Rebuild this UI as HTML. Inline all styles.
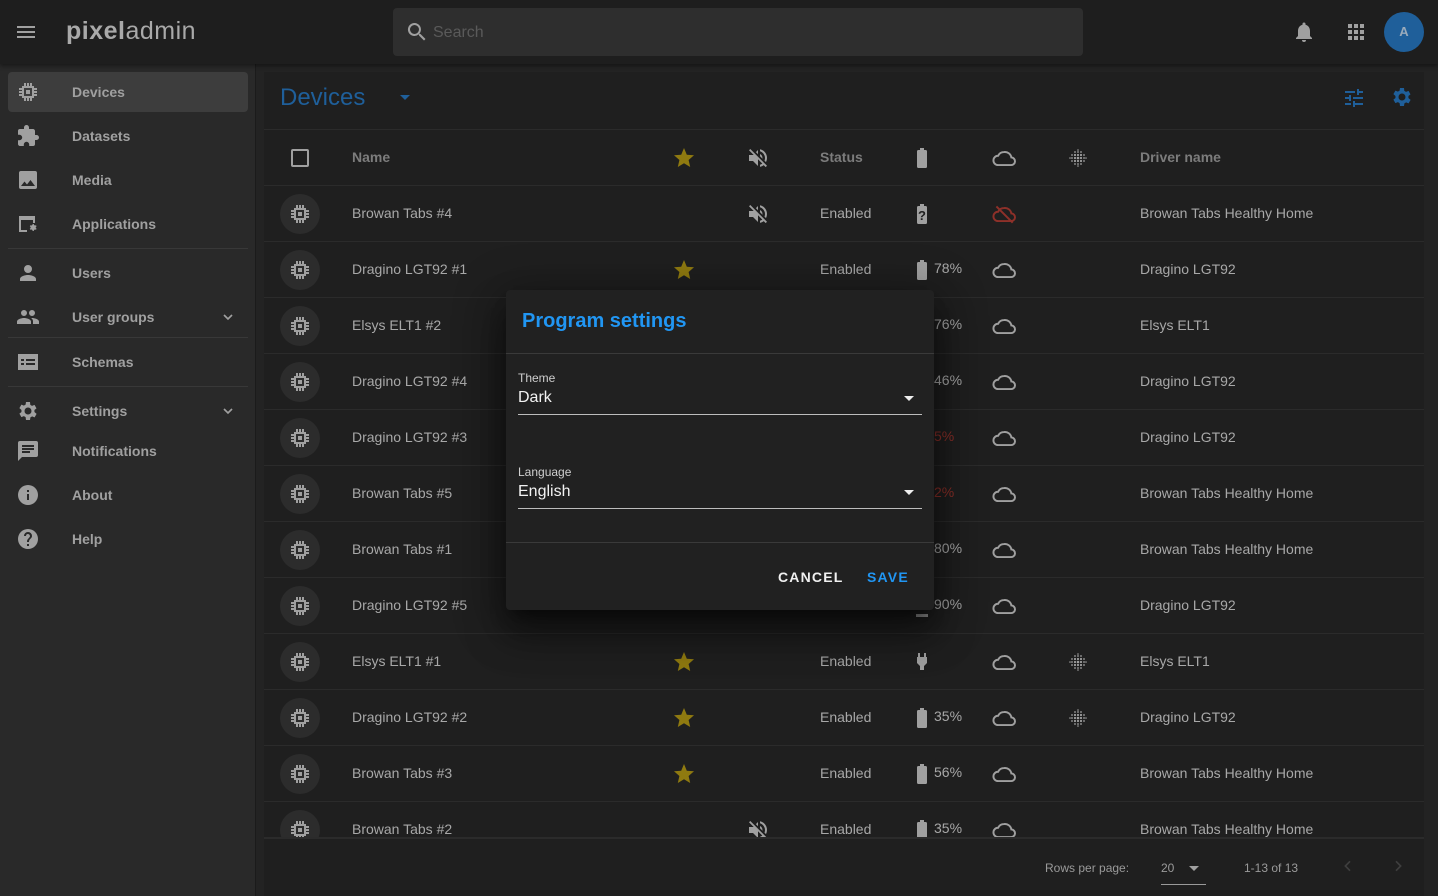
<!DOCTYPE html>
<html><head><meta charset="utf-8"><style>
*{box-sizing:border-box;margin:0;padding:0}
body{width:1438px;height:896px;overflow:hidden;background:#232323;font-family:"Liberation Sans",sans-serif;color:#a8a8a8;position:relative}
.top{position:absolute;left:0;top:0;width:1438px;height:64px;background:#1e1e1e;box-shadow:0 2px 4px rgba(0,0,0,.4);z-index:2}
.logo{position:absolute;left:66px;top:17px;font-size:25px;color:#a9a9a9;letter-spacing:.5px}
.logo b{font-weight:bold}
.search{position:absolute;left:393px;top:8px;width:690px;height:48px;background:#2e2e2e;border-radius:4px}
.search span{position:absolute;left:40px;top:16px;font-size:16px;color:#5a5a5a}
.side{position:absolute;left:0;top:64px;width:256px;height:832px;background:#292929;border-right:1px solid #1b1b1b}
.it{position:absolute;left:8px;width:240px;height:40px;font-size:14px;color:#a0a0a0;font-weight:bold}
.it span{position:absolute;left:64px;top:12px}
.it svg{position:absolute;left:8px;top:8px}
.it .ch{left:212px;top:12px}
.sel{background:#3d3d3d;border-radius:4px}
.hr{position:absolute;left:8px;width:240px;height:1px;background:#383838}
.panel{position:absolute;left:264px;top:72px;width:1160px;height:824px;background:#1f1f1f}
.ttl{position:absolute;left:16px;top:12px;font-size:24px;color:#1f5f9a}
.row{position:absolute;left:0;width:1160px;height:56px;border-bottom:1px solid #2b2b2b;font-size:14px}
.row>*{position:absolute}
.nm{left:88px;top:19px}
.st{left:556px;top:19px}
.dr{left:876px;top:19px}
.pc{left:670px;top:18px;font-size:14px}
.av{left:16px;top:8px;width:40px;height:40px;border-radius:50%;background:#2c2c2c}
.av svg{position:absolute;left:8px;top:8px}
.i{top:16px}
.hd{font-weight:bold;color:#7c7c7c}
.red{color:#8e3029}
.foot{position:absolute;left:264px;top:838px;width:1160px;height:58px;font-size:12px;color:#9a9a9a}
.dlg{position:absolute;left:506px;top:290px;width:428px;height:320px;background:#212121;border-radius:4px;box-shadow:0 11px 15px -7px rgba(0,0,0,.5),0 24px 38px 3px rgba(0,0,0,.35),0 9px 46px 8px rgba(0,0,0,.3);z-index:5}
.dlg .t{position:absolute;left:16px;top:20px;font-size:20px;color:#2196f3;font-weight:bold}
.dv{position:absolute;left:0;width:428px;height:1px;background:#3a3a3a}
.lb{position:absolute;left:12px;font-size:12px;color:#cfcfcf}
.vl{position:absolute;left:12px;font-size:16px;color:#f2f2f2}
.ul{position:absolute;left:12px;width:404px;height:1px;background:#bdbdbd}
.ar{position:absolute;left:398px;width:0;height:0;border-left:5px solid transparent;border-right:5px solid transparent;border-top:5px solid #eee}
.btn{position:absolute;top:279px;font-size:14px;font-weight:bold;letter-spacing:1.2px}
</style></head><body>
<svg width="0" height="0" style="position:absolute">
<defs>
<symbol id="chip" viewBox="0 0 24 24"><path fill="currentColor" fill-rule="evenodd" d="M6 6h12v12H6zM8 8v8h8V8zM10 10h4v4h-4zM8 3h2v3H8zM11 3h2v3h-2zM14 3h2v3h-2zM8 18h2v3H8zM11 18h2v3h-2zM14 18h2v3h-2zM3 8h3v2H3zM3 11h3v2H3zM3 14h3v2H3zM18 8h3v2h-3zM18 11h3v2h-3zM18 14h3v2h-3z"/></symbol>
<symbol id="star" viewBox="0 0 24 24"><path fill="#8f7a10" d="M12 17.3l6.2 3.7-1.6-7 5.4-4.7-7.2-.6L12 2 9.2 8.7 2 9.3l5.4 4.7-1.6 7z"/></symbol>
<symbol id="mute" viewBox="0 0 24 24"><path fill="#a0a0a0" d="M16.5 12A4.5 4.5 0 0014 8v2.2l2.5 2.5V12zM19 12c0 .9-.2 1.8-.5 2.6l1.5 1.5A8.8 8.8 0 0021 12a9 9 0 00-7-8.8v2.1A7 7 0 0119 12zM4.3 3L3 4.3 7.7 9H3v6h4l5 5v-6.7l4.3 4.3c-.7.5-1.4.9-2.3 1.2v2.1a9 9 0 003.7-1.8l2 2 1.3-1.3-9-9zM12 4L9.9 6.1 12 8.2z"/></symbol>
<symbol id="bat" viewBox="0 0 24 24"><path fill="#a0a0a0" d="M15.7 4H14V2h-4v2H8.3C7.6 4 7 4.6 7 5.3v15.3c0 .8.6 1.4 1.3 1.4h7.3c.8 0 1.4-.6 1.4-1.3V5.3C17 4.6 16.4 4 15.7 4z"/></symbol>
<symbol id="cloud" viewBox="0 0 24 24"><path fill="none" stroke="#a0a0a0" stroke-width="1.8" d="M6.5 18.5h12a3.5 3.5 0 00.3-7A6 6 0 0012 6.5a6 6 0 00-5.4 3.4A4.3 4.3 0 006.5 18.5z"/></symbol>
<symbol id="grid" viewBox="0 0 24 24"><g fill="#a0a0a0"><circle cx="12" cy="4" r=".8"/><circle cx="12" cy="20" r=".8"/><circle cx="4" cy="12" r=".8"/><circle cx="20" cy="12" r=".8"/><circle cx="9" cy="6" r=".9"/><circle cx="15" cy="6" r=".9"/><circle cx="9" cy="18" r=".9"/><circle cx="15" cy="18" r=".9"/><circle cx="6" cy="9" r=".9"/><circle cx="6" cy="15" r=".9"/><circle cx="18" cy="9" r=".9"/><circle cx="18" cy="15" r=".9"/><circle cx="9" cy="9" r="1.1"/><circle cx="12" cy="9" r="1.1"/><circle cx="15" cy="9" r="1.1"/><circle cx="9" cy="12" r="1.1"/><circle cx="12" cy="12" r="1.3"/><circle cx="15" cy="12" r="1.1"/><circle cx="9" cy="15" r="1.1"/><circle cx="12" cy="15" r="1.1"/><circle cx="15" cy="15" r="1.1"/><circle cx="12" cy="6" r=".9"/><circle cx="12" cy="18" r=".9"/><circle cx="6" cy="12" r=".9"/><circle cx="18" cy="12" r=".9"/></g></symbol>
</defs></svg>

<div class="top">
<svg style="position:absolute;left:14px;top:20px" width="24" height="24" viewBox="0 0 24 24"><path fill="#a0a0a0" d="M3 6h18v2H3zM3 11h18v2H3zM3 16h18v2H3z"/></svg>
<div class="logo"><b>pixel</b>admin</div>
<div class="search"><svg style="position:absolute;left:12px;top:12px" width="24" height="24" viewBox="0 0 24 24"><path fill="#a0a0a0" d="M15.5 14h-.8l-.3-.3A6.5 6.5 0 109.5 16a6.5 6.5 0 004.2-1.6l.3.3v.8l5 5 1.5-1.5-5-5zm-6 0A4.5 4.5 0 1114 9.5 4.5 4.5 0 019.5 14z"/></svg><span>Search</span></div>
<svg style="position:absolute;left:1292px;top:20px" width="24" height="24" viewBox="0 0 24 24"><path fill="#a0a0a0" d="M12 22a2 2 0 002-2h-4a2 2 0 002 2zm6-6v-5c0-3.1-1.6-5.6-4.5-6.3V4a1.5 1.5 0 00-3 0v.7C7.6 5.4 6 7.9 6 11v5l-2 2v1h16v-1z"/></svg>
<svg style="position:absolute;left:1344px;top:20px" width="24" height="24" viewBox="0 0 24 24"><path fill="#a0a0a0" d="M4 4h4v4H4zM10 4h4v4h-4zM16 4h4v4h-4zM4 10h4v4H4zM10 10h4v4h-4zM16 10h4v4h-4zM4 16h4v4H4zM10 16h4v4h-4zM16 16h4v4h-4z"/></svg>
<div style="position:absolute;left:1384px;top:12px;width:40px;height:40px;border-radius:50%;background:#1f5f9a;color:#9ab;font-size:13px;text-align:center;line-height:40px;font-weight:bold">A</div>
</div>

<div class="side">
<div class="it sel" style="top:8px"><svg width="24" height="24" style="color:#a0a0a0"><use href="#chip"/></svg><span>Devices</span></div>
<div class="it" style="top:52px"><svg width="24" height="24" viewBox="0 0 24 24"><path fill="#a0a0a0" d="M20.5 11H19V7c0-1.1-.9-2-2-2h-4V3.5a2.5 2.5 0 00-5 0V5H4a2 2 0 00-2 2v3.8h1.5a2.7 2.7 0 010 5.4H2V20c0 1.1.9 2 2 2h3.8v-1.5a2.7 2.7 0 015.4 0V22H17a2 2 0 002-2v-4h1.5a2.5 2.5 0 000-5z"/></svg><span>Datasets</span></div>
<div class="it" style="top:96px"><svg width="24" height="24" viewBox="0 0 24 24"><path fill="#a0a0a0" d="M21 19V5a2 2 0 00-2-2H5a2 2 0 00-2 2v14a2 2 0 002 2h14a2 2 0 002-2zM8.5 13.5l2.5 3 3.5-4.5 4.5 6H5z"/></svg><span>Media</span></div>
<div class="it" style="top:140px"><svg width="24" height="24" viewBox="0 0 24 24"><path fill="#a0a0a0" d="M3 4h16v7h-2V8H5v10h6v2H3zM18 13l1 .5 1-.3.6 1-.8.8v1l.8.8-.6 1-1-.3-1 .5-.2 1h-1.2l-.2-1-1-.5-1 .3-.6-1 .8-.8v-1l-.8-.8.6-1 1 .3 1-.5.2-1h1.2z"/></svg><span>Applications</span></div>
<div class="hr" style="top:184px"></div>
<div class="it" style="top:189px"><svg width="24" height="24" viewBox="0 0 24 24"><path fill="#a0a0a0" d="M12 12a4 4 0 100-8 4 4 0 000 8zm0 2c-2.7 0-8 1.3-8 4v2h16v-2c0-2.7-5.3-4-8-4z"/></svg><span>Users</span></div>
<div class="it" style="top:233px"><svg width="24" height="24" viewBox="0 0 24 24"><path fill="#a0a0a0" d="M16 11a3 3 0 100-6 3 3 0 000 6zm-8 0a3 3 0 100-6 3 3 0 000 6zm0 2c-2.3 0-7 1.2-7 3.5V19h14v-2.5C15 14.2 10.3 13 8 13zm8 0h-1a4 4 0 012 3.5V19h6v-2.5c0-2.3-4.7-3.5-7-3.5z"/></svg><span>User groups</span><svg class="ch" width="16" height="16" viewBox="0 0 24 24"><path fill="none" stroke="#a0a0a0" stroke-width="2.5" d="M6 9l6 6 6-6"/></svg></div>
<div class="hr" style="top:273px"></div>
<div class="it" style="top:278px"><svg width="24" height="24" viewBox="0 0 24 24"><path fill="#a0a0a0" fill-rule="evenodd" d="M2 4h20v16H2zM5 9h3v2H5zM10 9h9v2h-9zM5 13h3v2H5zM10 13h9v2h-9z"/></svg><span>Schemas</span></div>
<div class="hr" style="top:322px"></div>
<div class="it" style="top:327px"><svg width="24" height="24" viewBox="0 0 24 24"><path fill="#a0a0a0" d="M19.4 13a7.5 7.5 0 000-2l2.1-1.6-2-3.5-2.5 1a7 7 0 00-1.7-1L15 3h-4l-.4 2.6a7 7 0 00-1.7 1l-2.5-1-2 3.5L6.5 11a7.5 7.5 0 000 2l-2.1 1.6 2 3.5 2.5-1c.5.4 1.1.7 1.7 1L11 21h4l.4-2.6c.6-.3 1.2-.6 1.7-1l2.5 1 2-3.5zM13 15.5a3.5 3.5 0 110-7 3.5 3.5 0 010 7z" transform="translate(-1 0)"/></svg><span>Settings</span><svg class="ch" width="16" height="16" viewBox="0 0 24 24"><path fill="none" stroke="#a0a0a0" stroke-width="2.5" d="M6 9l6 6 6-6"/></svg></div>
<div class="it" style="top:367px"><svg width="24" height="24" viewBox="0 0 24 24"><path fill="#a0a0a0" d="M20 2H4a2 2 0 00-2 2v18l4-4h14a2 2 0 002-2V4a2 2 0 00-2-2zM6 9h12v2H6zm8 5H6v-2h8zm4-6H6V6h12z"/></svg><span>Notifications</span></div>
<div class="it" style="top:411px"><svg width="24" height="24" viewBox="0 0 24 24"><path fill="#a0a0a0" d="M12 2a10 10 0 100 20 10 10 0 000-20zm1 15h-2v-6h2zm0-8h-2V7h2z"/></svg><span>About</span></div>
<div class="it" style="top:455px"><svg width="24" height="24" viewBox="0 0 24 24"><path fill="#a0a0a0" d="M12 2a10 10 0 100 20 10 10 0 000-20zm1 17h-2v-2h2zm2-7.8l-.9.9c-.7.7-1.1 1.3-1.1 2.9h-2v-.5c0-1.1.4-2.1 1.2-2.8l1.2-1.3A2 2 0 0012 7a2 2 0 00-2 2H8a4 4 0 018 0c0 .9-.4 1.7-1 2.2z"/></svg><span>Help</span></div>
</div>

<div class="panel">
<div class="ttl">Devices</div>
<div style="position:absolute;left:136px;top:23px;border-left:5px solid transparent;border-right:5px solid transparent;border-top:5px solid #1f5f9a"></div>
<svg style="position:absolute;left:1078px;top:14px" width="24" height="24" viewBox="0 0 24 24"><path fill="#1f5f9a" d="M3 17v2h6v-2zM3 5v2h10V5zm10 16v-2h8v-2h-8v-2h-2v6zM7 9v2H3v2h4v2h2V9zm14 4v-2H11v2zm-6-4h2V7h4V5h-4V3h-2z"/></svg>
<svg style="position:absolute;left:1126px;top:13px" width="24" height="24" viewBox="0 0 24 24"><path fill="#1f5f9a" d="M19.4 13a7.5 7.5 0 000-2l2.1-1.6-2-3.5-2.5 1a7 7 0 00-1.7-1L15 3h-4l-.4 2.6a7 7 0 00-1.7 1l-2.5-1-2 3.5L6.5 11a7.5 7.5 0 000 2l-2.1 1.6 2 3.5 2.5-1c.5.4 1.1.7 1.7 1L11 21h4l.4-2.6c.6-.3 1.2-.6 1.7-1l2.5 1 2-3.5zM13 15.5a3.5 3.5 0 110-7 3.5 3.5 0 010 7z" transform="translate(-1 0)"/></svg>
<div style="position:absolute;left:0;top:57px;width:1160px;height:1px;background:#2b2b2b"></div>

<div class="row hd" style="top:58px">
<div style="left:27px;top:19px;width:18px;height:18px;border:2px solid #a0a0a0;border-radius:2px"></div>
<span class="nm">Name</span>
<svg class="i" style="left:408px" width="24" height="24"><use href="#star"/></svg>
<svg class="i" style="left:482px" width="24" height="24"><use href="#mute"/></svg>
<span class="st">Status</span>
<svg class="i" style="left:646px" width="24" height="24"><use href="#bat"/></svg>
<svg class="i" style="left:727px;top:15px" width="26" height="26"><use href="#cloud"/></svg>
<svg class="i" style="left:802px" width="24" height="24"><use href="#grid"/></svg>
<span class="dr">Driver name</span>
</div>

<div class="row" style="top:114px"><div class="av"><svg width="24" height="24" style="color:#a0a0a0"><use href="#chip"/></svg></div><span class="nm">Browan Tabs #4</span><svg class="i" style="left:482px" width="24" height="24"><use href="#mute"/></svg><span class="st">Enabled</span><svg class="i" style="left:646px" width="24" height="24" viewBox="0 0 24 24"><path fill="#a0a0a0" d="M15.7 4H14V2h-4v2H8.3C7.6 4 7 4.6 7 5.3v15.3c0 .8.6 1.4 1.3 1.4h7.3c.8 0 1.4-.6 1.4-1.3V5.3C17 4.6 16.4 4 15.7 4z"/><text x="12" y="18" font-size="13" text-anchor="middle" fill="#1f1f1f" font-weight="bold" font-family="Liberation Sans">?</text></svg><svg class="i" style="left:727px;top:15px" width="26" height="26" viewBox="0 0 24 24"><path fill="none" stroke="#8e3029" stroke-width="1.8" d="M6.5 18.5h12a3.5 3.5 0 00.3-7A6 6 0 0012 6.5a6 6 0 00-5.4 3.4A4.3 4.3 0 006.5 18.5zM5 5l15 15"/></svg><span class="dr">Browan Tabs Healthy Home</span></div>

<div class="row" style="top:170px"><div class="av"><svg width="24" height="24" style="color:#a0a0a0"><use href="#chip"/></svg></div><span class="nm">Dragino LGT92 #1</span><svg class="i" style="left:408px" width="24" height="24"><use href="#star"/></svg><span class="st">Enabled</span><svg class="i" style="left:646px" width="24" height="24"><use href="#bat"/></svg><span class="pc">78%</span><svg class="i" style="left:727px;top:15px" width="26" height="26"><use href="#cloud"/></svg><span class="dr">Dragino LGT92</span></div>

<div class="row" style="top:226px"><div class="av"><svg width="24" height="24" style="color:#a0a0a0"><use href="#chip"/></svg></div><span class="nm">Elsys ELT1 #2</span><span class="pc">76%</span><svg class="i" style="left:727px;top:15px" width="26" height="26"><use href="#cloud"/></svg><span class="dr">Elsys ELT1</span></div>

<div class="row" style="top:282px"><div class="av"><svg width="24" height="24" style="color:#a0a0a0"><use href="#chip"/></svg></div><span class="nm">Dragino LGT92 #4</span><span class="pc">46%</span><svg class="i" style="left:727px;top:15px" width="26" height="26"><use href="#cloud"/></svg><span class="dr">Dragino LGT92</span></div>

<div class="row" style="top:338px"><div class="av"><svg width="24" height="24" style="color:#a0a0a0"><use href="#chip"/></svg></div><span class="nm">Dragino LGT92 #3</span><span class="pc red">5%</span><svg class="i" style="left:727px;top:15px" width="26" height="26"><use href="#cloud"/></svg><span class="dr">Dragino LGT92</span></div>

<div class="row" style="top:394px"><div class="av"><svg width="24" height="24" style="color:#a0a0a0"><use href="#chip"/></svg></div><span class="nm">Browan Tabs #5</span><span class="pc red">2%</span><svg class="i" style="left:727px;top:15px" width="26" height="26"><use href="#cloud"/></svg><span class="dr">Browan Tabs Healthy Home</span></div>

<div class="row" style="top:450px"><div class="av"><svg width="24" height="24" style="color:#a0a0a0"><use href="#chip"/></svg></div><span class="nm">Browan Tabs #1</span><span class="pc">80%</span><svg class="i" style="left:727px;top:15px" width="26" height="26"><use href="#cloud"/></svg><span class="dr">Browan Tabs Healthy Home</span></div>

<div class="row" style="top:506px"><div class="av"><svg width="24" height="24" style="color:#a0a0a0"><use href="#chip"/></svg></div><span class="nm">Dragino LGT92 #5</span><div style="left:652px;top:36px;width:12px;height:3px;background:#a0a0a0"></div><span class="pc">90%</span><svg class="i" style="left:727px;top:15px" width="26" height="26"><use href="#cloud"/></svg><span class="dr">Dragino LGT92</span></div>

<div class="row" style="top:562px"><div class="av"><svg width="24" height="24" style="color:#a0a0a0"><use href="#chip"/></svg></div><span class="nm">Elsys ELT1 #1</span><svg class="i" style="left:408px" width="24" height="24"><use href="#star"/></svg><span class="st">Enabled</span><svg class="i" style="left:646px" width="24" height="24" viewBox="0 0 24 24"><path fill="#a0a0a0" d="M16 7V3h-2v4h-4V3H8v4H7v6l3 3v4h4v-4l3-3V7z"/></svg><svg class="i" style="left:727px;top:15px" width="26" height="26"><use href="#cloud"/></svg><svg class="i" style="left:802px" width="24" height="24"><use href="#grid"/></svg><span class="dr">Elsys ELT1</span></div>

<div class="row" style="top:618px"><div class="av"><svg width="24" height="24" style="color:#a0a0a0"><use href="#chip"/></svg></div><span class="nm">Dragino LGT92 #2</span><svg class="i" style="left:408px" width="24" height="24"><use href="#star"/></svg><span class="st">Enabled</span><svg class="i" style="left:646px" width="24" height="24"><use href="#bat"/></svg><span class="pc">35%</span><svg class="i" style="left:727px;top:15px" width="26" height="26"><use href="#cloud"/></svg><svg class="i" style="left:802px" width="24" height="24"><use href="#grid"/></svg><span class="dr">Dragino LGT92</span></div>

<div class="row" style="top:674px"><div class="av"><svg width="24" height="24" style="color:#a0a0a0"><use href="#chip"/></svg></div><span class="nm">Browan Tabs #3</span><svg class="i" style="left:408px" width="24" height="24"><use href="#star"/></svg><span class="st">Enabled</span><svg class="i" style="left:646px" width="24" height="24"><use href="#bat"/></svg><span class="pc">56%</span><svg class="i" style="left:727px;top:15px" width="26" height="26"><use href="#cloud"/></svg><span class="dr">Browan Tabs Healthy Home</span></div>

<div class="row" style="top:730px;height:36px;overflow:hidden"><div class="av"><svg width="24" height="24" style="color:#a0a0a0"><use href="#chip"/></svg></div><span class="nm">Browan Tabs #2</span><svg class="i" style="left:482px" width="24" height="24"><use href="#mute"/></svg><span class="st">Enabled</span><svg class="i" style="left:646px" width="24" height="24"><use href="#bat"/></svg><span class="pc">35%</span><svg class="i" style="left:727px;top:15px" width="26" height="26"><use href="#cloud"/></svg><span class="dr">Browan Tabs Healthy Home</span></div>
</div>

<div class="foot">
<div style="position:absolute;left:0;top:0;width:1160px;height:1px;background:#2b2b2b"></div>
<span style="position:absolute;left:781px;top:23px">Rows per page:</span>
<span style="position:absolute;left:897px;top:23px">20</span>
<div style="position:absolute;left:925px;top:28px;border-left:5px solid transparent;border-right:5px solid transparent;border-top:5px solid #a0a0a0"></div>
<div style="position:absolute;left:897px;top:46px;width:45px;height:1px;background:#9a9a9a"></div>
<span style="position:absolute;left:980px;top:23px">1-13 of 13</span>
<svg style="position:absolute;left:1076px;top:20px" width="16" height="16" viewBox="0 0 24 24"><path fill="none" stroke="#3e3e3e" stroke-width="2.5" d="M15 5l-7 7 7 7"/></svg>
<svg style="position:absolute;left:1126px;top:20px" width="16" height="16" viewBox="0 0 24 24"><path fill="none" stroke="#3e3e3e" stroke-width="2.5" d="M9 5l7 7-7 7"/></svg>
</div>

<div class="dlg">
<div class="t">Program settings</div>
<div class="dv" style="top:63px"></div>
<div class="lb" style="top:81px">Theme</div>
<div class="vl" style="top:99px">Dark</div>
<div class="ar" style="top:106px"></div>
<div class="ul" style="top:124px"></div>
<div class="lb" style="top:175px">Language</div>
<div class="vl" style="top:193px">English</div>
<div class="ar" style="top:200px"></div>
<div class="ul" style="top:218px"></div>
<div class="dv" style="top:252px"></div>
<div class="btn" style="left:272px;color:#f0f0f0">CANCEL</div>
<div class="btn" style="left:361px;color:#2196f3">SAVE</div>
</div>
</body></html>
